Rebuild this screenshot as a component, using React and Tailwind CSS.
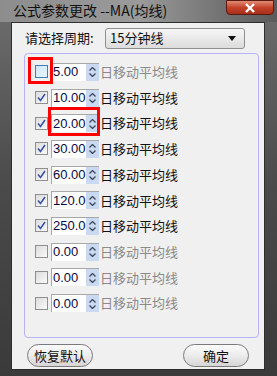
import React from 'react';

const rows = [
  { on: false, value: '5.00', hover: true },
  { on: true, value: '10.00' },
  { on: true, value: '20.00' },
  { on: true, value: '30.00' },
  { on: true, value: '60.00' },
  { on: true, value: '120.00' },
  { on: true, value: '250.00' },
  { on: false, value: '0.00' },
  { on: false, value: '0.00' },
  { on: false, value: '0.00' },
];

const cjk = { fontFamily: '"Noto Sans CJK SC", "Liberation Sans", sans-serif' };
const num = { fontFamily: '"Liberation Sans", Arial, sans-serif' };

function CheckBox({ on, hover }) {
  return (
    <div className={`w-[13px] h-[13px] border flex items-center justify-center ${hover ? 'border-[#3c7fb1] bg-gradient-to-br from-[#cfe8fa] to-[#e8f4fc]' : 'border-[#8f8f8f] bg-gradient-to-br from-[#dcdcdc] to-[#fafafa]'}`}>
      {on && (
        <svg width="9" height="9" viewBox="0 0 9 9">
          <path d="M1 4.5 L3.5 7.5 L8 1" fill="none" stroke="#3a52a8" strokeWidth="1.6" />
        </svg>
      )}
    </div>
  );
}

function Spinner() {
  return (
    <div className="w-[13px] h-[17px] shrink-0 bg-[#c9d9f1] flex flex-col items-center justify-center gap-[2px]">
      <svg width="7" height="4" viewBox="0 0 7 4"><path d="M0.5 3.5 L3.5 0.5 L6.5 3.5" fill="none" stroke="#3e4a5c" strokeWidth="1.3" /></svg>
      <svg width="7" height="4" viewBox="0 0 7 4"><path d="M0.5 0.5 L3.5 3.5 L6.5 0.5" fill="none" stroke="#3e4a5c" strokeWidth="1.3" /></svg>
    </div>
  );
}

export default function App() {
  return (
    <div className="w-[277px] h-[376px] bg-gradient-to-b from-[#6e6e6e] via-[#4a4a4a] to-[#3a3a3a] flex flex-col relative overflow-hidden">
      <div className="h-[22px] flex items-start pl-[13px] pt-[1px] bg-gradient-to-r from-[#8d8d8d] via-[#9a9a9a] to-[#5a5a5a]">
        <span className="text-[14px] leading-[18px] text-[#111]" style={cjk}>公式参数更改 --MA(均线)</span>
      </div>
      <div className="absolute left-[226px] top-0 w-[48px] h-[15px] rounded-b-[4px] border border-[#5a1a10] bg-gradient-to-b from-[#e08a74] via-[#c4412a] to-[#a8301c] flex items-center justify-center">
        <svg width="12" height="10" viewBox="0 0 12 10">
          <path d="M2 1 L10 9 M10 1 L2 9" stroke="#fff" strokeWidth="2.4" />
        </svg>
      </div>
      <div className="ml-[11px] mr-[12px] mb-[6px] flex-1 bg-[#f0f0f0] border border-[#2e2e2e] flex flex-col">
        <div className="flex items-center pl-[13px] pt-[4px] h-[26px]">
          <span className="text-[13px] text-[#111] w-[80px]" style={cjk}>请选择周期:</span>
          <div className="w-[140px] h-[21px] rounded-[3px] border border-[#8e8f8f] bg-gradient-to-b from-[#f6f6f6] to-[#dcdcdc] flex items-center pl-[4px] pr-[8px]">
            <span className="text-[13px] text-[#111] flex-1" style={cjk}>15分钟线</span>
            <svg width="8" height="5" viewBox="0 0 8 5"><path d="M0 0 L8 0 L4 5 Z" fill="#111" /></svg>
          </div>
        </div>
        <div className="relative ml-[12px] mt-[4px] w-[235px] h-[285px] border border-[#b7b3f2] rounded-[4px] pt-[5px] pl-[10px]">
          {rows.map((r, i) => (
            <div key={i} className="h-[25.7px] flex items-center">
              <CheckBox on={r.on} hover={r.hover} />
              <div className="ml-[3px] w-[48px] h-[18px] flex items-center border-l border-t border-[#a8a8a8] bg-white">
                <span className="flex-1 min-w-0 text-[13px] leading-[16px] text-[#0a0a40] pl-[1px] overflow-hidden whitespace-nowrap" style={num}>{r.value}</span>
                <Spinner />
              </div>
              <span className={`ml-[1px] text-[13px] ${r.on ? 'text-[#111]' : 'text-[#8a8a8a]'}`} style={cjk}>日移动平均线</span>
            </div>
          ))}
          <div className="absolute left-[3px] top-[3px] w-[25px] h-[27px] border-[3px] border-[#ff0000]" />
          <div className="absolute left-[23px] top-[53px] w-[52px] h-[29px] border-[3px] border-[#ff0000]" />
        </div>
        <div className="flex justify-between px-[15px] mt-[6px]">
          <button className="w-[66px] h-[23px] rounded-full border border-[#7a7a7a] bg-gradient-to-b from-[#fbfbfb] via-[#ececec] to-[#d6d6d6] text-[13px] text-[#111]" style={cjk}>恢复默认</button>
          <button className="w-[66px] h-[23px] rounded-full border border-[#7a7a7a] bg-gradient-to-b from-[#fbfbfb] via-[#ececec] to-[#d6d6d6] text-[13px] text-[#111]" style={cjk}>确定</button>
        </div>
      </div>
    </div>
  );
}
